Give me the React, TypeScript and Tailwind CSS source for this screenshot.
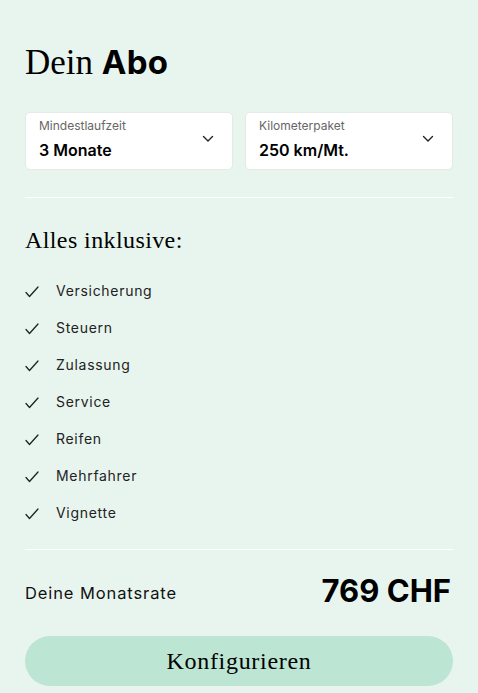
import React from "react";

const items = ["Versicherung", "Steuern", "Zulassung", "Service", "Reifen", "Mehrfahrer", "Vignette"];

const serif = "font-['Liberation_Serif',serif]";
const sans = "font-['Inter',sans-serif]";

const Chevron: React.FC = () => (
  <svg width="12" height="8" viewBox="0 0 12 8" fill="none" stroke="#222" strokeWidth="1.4" strokeLinecap="round" strokeLinejoin="round">
    <path d="M1.5 1.5 6 6l4.5-4.5" />
  </svg>
);

const Check: React.FC = () => (
  <svg width="14" height="12" viewBox="0 0 14 12" fill="none" stroke="#222" strokeWidth="1.3" strokeLinecap="round" strokeLinejoin="round">
    <path d="M1 6.5 4.5 10.5 13 1" />
  </svg>
);

const Select: React.FC<{ label: string; value: string }> = ({ label, value }) => (
  <div className="flex-1 h-[58px] bg-white rounded-[5px] border border-[#e2ebe6] px-[13px] pt-[5px] flex justify-between">
    <div className="flex flex-col">
      <span className={`${sans} text-[12px] text-[#666] leading-[16px]`}>{label}</span>
      <span className={`${sans} text-[16px] font-semibold text-black leading-[22px] mt-[5px]`}>{value}</span>
    </div>
    <div className="pt-[17px] pr-[5px]">
      <Chevron />
    </div>
  </div>
);

export default function App() {
  return (
    <div className="w-[478px] h-[693px] bg-[#e8f5ef] px-[25px] pt-[40px] overflow-hidden">
      <h1 className="text-[35px] leading-[42px] text-black">
        <span className={serif}>Dein </span>
        <span className={`${sans} font-bold text-[33px] tracking-[0.3px]`}>Abo</span>
      </h1>

      <div className="flex gap-[12px] mt-[28px]">
        <Select label="Mindestlaufzeit" value="3 Monate" />
        <Select label="Kilometerpaket" value="250 km/Mt." />
      </div>

      <div className="h-px bg-white mt-[27px]" />

      <h2 className={`${serif} text-[24px] tracking-[0.4px] leading-[30px] text-black mt-[27px]`}>Alles inklusive:</h2>

      <ul className="mt-[25px] flex flex-col gap-[17px]">
        {items.map((item) => (
          <li key={item} className="flex items-center h-[20px]">
            <span className="w-[31px] pt-[4px]">
              <Check />
            </span>
            <span className={`${sans} text-[14px] tracking-[0.7px] text-[#222]`}>{item}</span>
          </li>
        ))}
      </ul>

      <div className="h-px bg-white mt-[27px]" />

      <div className="flex items-center justify-between mt-[21px]">
        <span className={`${sans} text-[16.5px] tracking-[0.9px] text-[#111] pt-[4px]`}>Deine Monatsrate</span>
        <span className={`${sans} text-[31px] font-bold text-black leading-[40px] pr-[2px]`}>769 CHF</span>
      </div>

      <button className={`${serif} mt-[25px] w-full h-[50px] rounded-full bg-[#bce5d3] text-[24px] tracking-[0.7px] text-black`}>
        Konfigurieren
      </button>
    </div>
  );
}
